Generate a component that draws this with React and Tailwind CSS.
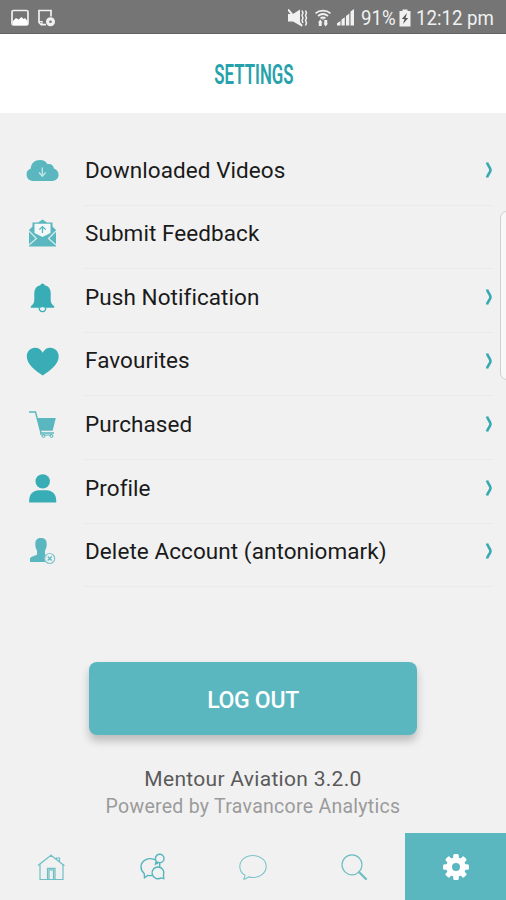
const TEAL = '#5ab7bf';
const DEEP = '#38adb5';

function RowIcon({ children }) {
  return (
    <svg viewBox="0 0 40 40" className="mb-[6px] ml-[22px] h-10 w-10 shrink-0" fill="none">
      {children}
    </svg>
  );
}

const CloudIcon = () => (
  <RowIcon>
    <path fill={TEAL} d="M11 30a6.500 6.500 0 0 1-2.200-12.600C8.800 12.500 13 9 18 9c3.600 0 6 1.500 7.600 4.200 3.400-.8 6 1.500 6.300 4.400A6.300 6.300 0 0 1 30.500 30Z" />
    <path stroke="#c5e6e8" strokeWidth="1.300" d="M20.300 16.500v8.500M17 21.500l3.300 3.700 3.300-3.700" />
  </RowIcon>
);

const EnvelopeIcon = () => (
  <RowIcon>
    <path fill={TEAL} d="M16 8.500 20.500 5.500 25 8.500h5.500v4L34 16v16.500H7V16l3.500-3.500v-4Z" />
    <path fill="#f4f8f8" d="M12.500 9.700h16v9.300l-8 4-8-4Z" />
    <path stroke="#d9ecee" strokeWidth="1.200" d="m7 17 7.500 7.500L7 31M34 17l-7.500 7.500L34 31" />
    <path stroke={TEAL} strokeWidth="1.300" d="M20.500 19v-6.500M17.300 15.600l3.200-3 3.200 3" />
  </RowIcon>
);

const BellIcon = () => (
  <RowIcon>
    <path fill={DEEP} d="M18.300 7.200a2.300 2.300 0 0 1 4.400 0c4 .9 6 4 6 8v6.300c0 3 .8 4.700 3.500 6.700v1.600H8.800v-1.600c2.700-2 3.500-3.700 3.500-6.700v-6.300c0-4 2-7.100 6-8Z" />
    <path stroke={DEEP} strokeWidth="1.300" d="M17.300 29.500a3.300 3.300 0 1 0 6.400 0" />
    <circle cx="20.500" cy="30.800" r="1.700" fill="#e8f3f4" />
  </RowIcon>
);

const HeartIcon = () => (
  <RowIcon>
    <path fill={DEEP} d="M20.700 33.500C13 28.500 4.800 22.200 4.800 14.300c0-5 3.600-8.600 8.200-8.600 3.500 0 6.300 1.900 7.700 5 1.400-3.100 4.200-5 7.700-5 4.600 0 8.300 3.600 8.300 8.600 0 7.900-8.300 14.200-16 19.200Z" />
  </RowIcon>
);

const CartIcon = () => (
  <RowIcon>
    <path stroke={TEAL} strokeWidth="1.400" d="M7 7h6.500L19 28h13" />
    <path fill={TEAL} d="M15 13h18.800l-3.200 12.800H18.300Z" />
    <path stroke={TEAL} strokeWidth="1.100" d="M19 28c-.8 1.700.3 2 2 2h9" />
    <circle cx="21.500" cy="31" r="1.500" stroke={TEAL} />
    <circle cx="29.500" cy="31" r="1.500" stroke={TEAL} />
  </RowIcon>
);

const ProfileIcon = () => (
  <RowIcon>
    <circle cx="20.700" cy="12.400" r="7.200" fill={DEEP} />
    <path fill={DEEP} d="M7.200 33.500v-2.200c0-5.800 4-10 9.600-10h7.800c5.600 0 9.600 4.200 9.600 10v2.200Z" />
  </RowIcon>
);

const DeleteIcon = () => (
  <RowIcon>
    <path fill={TEAL} d="M13.300 11.800c0-3.800 2-5.800 5.700-5.800s5.700 2 5.700 5.800c0 3.500-.6 5.200-1.700 6.700v4.200l4.500 2V30H8v-2.800c0-1.300.5-2 1.800-2.500l5.200-2v-4.200c-1.100-1.500-1.700-3.200-1.700-6.700Z" />
    <circle cx="27.700" cy="26.500" r="5" fill="#f1f1f1" stroke="#7fc7cd" strokeWidth="1.200" />
    <path stroke={TEAL} strokeWidth="1.200" d="m25.700 24.500 4 4M29.700 24.500l-4 4" />
  </RowIcon>
);

const ROWS = [
  { label: 'Downloaded Videos', Icon: CloudIcon, arrow: true },
  { label: 'Submit Feedback', Icon: EnvelopeIcon, arrow: false },
  { label: 'Push Notification', Icon: BellIcon, arrow: true },
  { label: 'Favourites', Icon: HeartIcon, arrow: true },
  { label: 'Purchased', Icon: CartIcon, arrow: true },
  { label: 'Profile', Icon: ProfileIcon, arrow: true },
  { label: 'Delete Account (antoniomark)', Icon: DeleteIcon, arrow: true },
];

function StatusBar() {
  return (
    <div className="flex h-[34px] items-center border-b border-[#626262] bg-[#757575] pt-0.5 text-[#f1f1f1]">
      <svg viewBox="0 0 18 18" className="ml-[11px] h-[18px] w-[18px]" fill="none">
        <rect x="1" y="1.500" width="16" height="14.500" rx="1.500" stroke="#f1f1f1" strokeWidth="1.700" />
        <path fill="#fff" d="m2 12 3-3 2.500 1.500L10.500 8l2 2L14 9l2.500 3v4H2Z" />
      </svg>
      <svg viewBox="0 0 18 18" className="ml-[9px] h-[18px] w-[18px]" fill="none">
        <path stroke="#f1f1f1" strokeWidth="1.700" d="M8 15.700H3.200L1 13.500V1.500h12v6" />
        <path stroke="#f1f1f1" strokeWidth="1.200" d="M4 15.500v-3H1" />
        <circle cx="12.500" cy="12.700" r="4.500" fill="#f1f1f1" />
        <circle cx="12.500" cy="12.700" r="1.300" fill="#757575" />
      </svg>
      <div className="flex-1" />
      <svg viewBox="0 0 20 18" className="h-[18px] w-5" fill="none">
        <path fill="#f1f1f1" d="M0 5h5l7-4.500v16L5 12.500H0Z" />
        <path stroke="#f1f1f1" strokeWidth="2" d="m0 .5 14 16.500" />
        <path stroke="#f1f1f1" strokeWidth="1.500" d="m14 1.500 1 2.500-1 2.500 1 2.500-1 2.500 1 2.500M17.500 1.500l1 2.500-1 2.500 1 2.500-1 2.500 1 2.500-1 2.500" />
      </svg>
      <svg viewBox="0 0 18 18" className="ml-[6px] h-[18px] w-[18px]" fill="none">
        <path stroke="#f1f1f1" strokeWidth="1.700" d="M1.500 4.300c4.300-3.500 10.700-3.500 15 0M4 7c3-2.400 7-2.400 10 0M6.500 9.300c1.500-1 3.500-1 5 0" />
        <path fill="#f1f1f1" d="m9 11 1.500-1.500h-3ZM6.300 10.500l2.200 3H7.700V17H4.800v-3.500H4ZM11.700 17.500l-2.200-3h.8V11h2.900v3.500h.8Z" />
      </svg>
      <svg viewBox="0 0 18 18" className="ml-[5px] h-[18px] w-[18px]" fill="#f1f1f1">
        <path d="M0 16.500v-2.300L3.500 12v4.500ZM4.500 16.500v-6l3.300-2.200v8.200ZM9 16.500V7l3.300-2.500v12ZM13.500 16.500v-14L17 0v16.500Z" />
      </svg>
      <span className="ml-[6px] mt-0.5 w-[35px] origin-left scale-x-[0.91] whitespace-nowrap text-[20.500px] leading-none">91%</span>
      <svg viewBox="0 0 12 18" className="ml-[3px] h-[18px] w-3">
        <path fill="#f1f1f1" d="M3.500.5h5V2H11.500v15.500H.5V2h3Z" />
        <path fill="#565656" d="M8 4 2.800 10h2.700l-1.500 5L9.200 9H6.500Z" />
      </svg>
      <span className="ml-[5px] mr-[12px] mt-0.5 w-[78px] origin-left scale-x-[0.91] whitespace-nowrap text-[20.500px] leading-none">12:12 pm</span>
    </div>
  );
}

const NAV = [
  <svg key="home" viewBox="0 0 30 30" className="h-[30px] w-[30px]" fill="none" stroke="#6fc0c6" strokeWidth="1.200">
    <path d="M4 27.500V11.700L15 3.300l12 9.500v14.700ZM2 13.500 15 3.300l13.500 10.400M11.500 27.500V16.300h7.500v11.200M13 27.500V17.800h4.500v9.700M20.500 7.500V6h3v4" />
  </svg>,
  <svg key="group" viewBox="0 0 30 30" className="h-[30px] w-[30px]" fill="none" stroke="#55b5bd" strokeWidth="1.400">
    <path d="M18 7.800C11 4.500 4 9 4 14.800c0 3 1.300 5.200 3.200 6.700l.3 4.200 3.300-2.200c1.500.3 2.800.2 4.200-.1" />
    <circle cx="22.700" cy="6.500" r="4.300" />
    <path d="m19.200 9.500-.7 2.500 2.500-1M22.700 11v3.700M26.700 26.700l-2.700-.8a5.900 5.900 0 1 1 2.500-3Z" />
  </svg>,
  <svg key="chat" viewBox="0 0 30 30" className="h-[30px] w-[30px]" fill="none" stroke="#7bc5ca" strokeWidth="1.100">
    <path d="M15 3.500C7.700 3.500 1.800 8.300 1.800 14.500c0 3.800 2 7 5.200 8.800 0 1.500-.6 2.900-1.300 3.900 2 0 3.600-1 4.800-2.300 1.500.4 3 .6 4.500.6 7.300 0 13.200-4.800 13.200-11S22.300 3.500 15 3.500Z" />
  </svg>,
  <svg key="search" viewBox="0 0 30 30" className="h-[30px] w-[30px]" fill="none" stroke="#6bbec4">
    <circle cx="13" cy="12.800" r="10" strokeWidth="1.200" />
    <path strokeWidth="2.200" strokeLinecap="round" d="m20 20 7 7" />
  </svg>,
];

export default function App() {
  return (
    <div className="relative flex h-[900px] w-[506px] flex-col overflow-hidden bg-[#f1f1f1] font-[Roboto,sans-serif]">
      <StatusBar />
      <header className="flex h-[79px] items-center justify-center bg-white pl-[2px] pt-[2px]">
        <h1 className="origin-center scale-x-[0.6] text-[28px] font-semibold leading-none text-[#25a2ab]">SETTINGS</h1>
      </header>

      <ul className="pt-[29px]">
        {ROWS.map(({ label, Icon, arrow }) => (
          <li key={label} className="flex h-[63.600px] items-center">
            <Icon />
            <div className="ml-[22px] mr-[13px] flex h-full flex-1 items-center justify-between border-b border-[#eaeaea] pb-[7px]">
              <span className="ml-px whitespace-nowrap text-[22.500px] leading-none tracking-[0.070px] text-[#1a1a1a]">{label}</span>
              {arrow && (
                <svg viewBox="0 0 8 18" className="h-[18px] w-2" fill="none">
                  <path d="M2 1.500C3 5 5.500 6.500 5.500 9S3 13 2 16.500" stroke="#38a9b1" strokeWidth="2.600" />
                </svg>
              )}
            </div>
          </li>
        ))}
      </ul>

      <button className="mx-auto mt-[75px] flex h-[73px] w-[328px] shrink-0 items-center justify-center rounded-lg bg-[#5ab7bf] pt-[6px] text-[23px] font-medium tracking-[-0.3px] text-white shadow-[0_6px_9px_rgba(0,0,0,0.22)]">
        LOG OUT
      </button>
      <p className="mt-[32px] text-center text-[21px] leading-[24px] tracking-[0.300px] text-[#5a5a5a]">Mentour Aviation 3.2.0</p>
      <p className="mt-[4px] text-center text-[19.500px] leading-[24px] tracking-[0.280px] text-[#9b9b9b]">Powered by Travancore Analytics</p>

      <nav className="mt-auto grid h-[67px] shrink-0 grid-cols-5">
        {NAV.map((icon) => (
          <div key={icon.key} className="flex items-center justify-center">{icon}</div>
        ))}
        <div className="flex items-center justify-center bg-[#5ab7bf]">
          <svg viewBox="-15 -15 30 30" className="ml-px h-[30px] w-[30px]">
            <g fill="#fff">
              {[0, 45, 90, 135].map((angle) => (
                <rect key={angle} x="-2.800" y="-13" width="5.600" height="26" rx="1.500" transform={`rotate(${angle})`} />
              ))}
              <circle r="9.800" />
            </g>
            <circle r="4" fill="#5ab7bf" />
          </svg>
        </div>
      </nav>

      {/* Edge panel handle overlapping the right side of the list */}
      <div className="absolute -right-2 top-[211px] h-[169px] w-[14px] rounded-lg border border-[#cfcfcf] bg-[#f8f8f8]" />
    </div>
  );
}
